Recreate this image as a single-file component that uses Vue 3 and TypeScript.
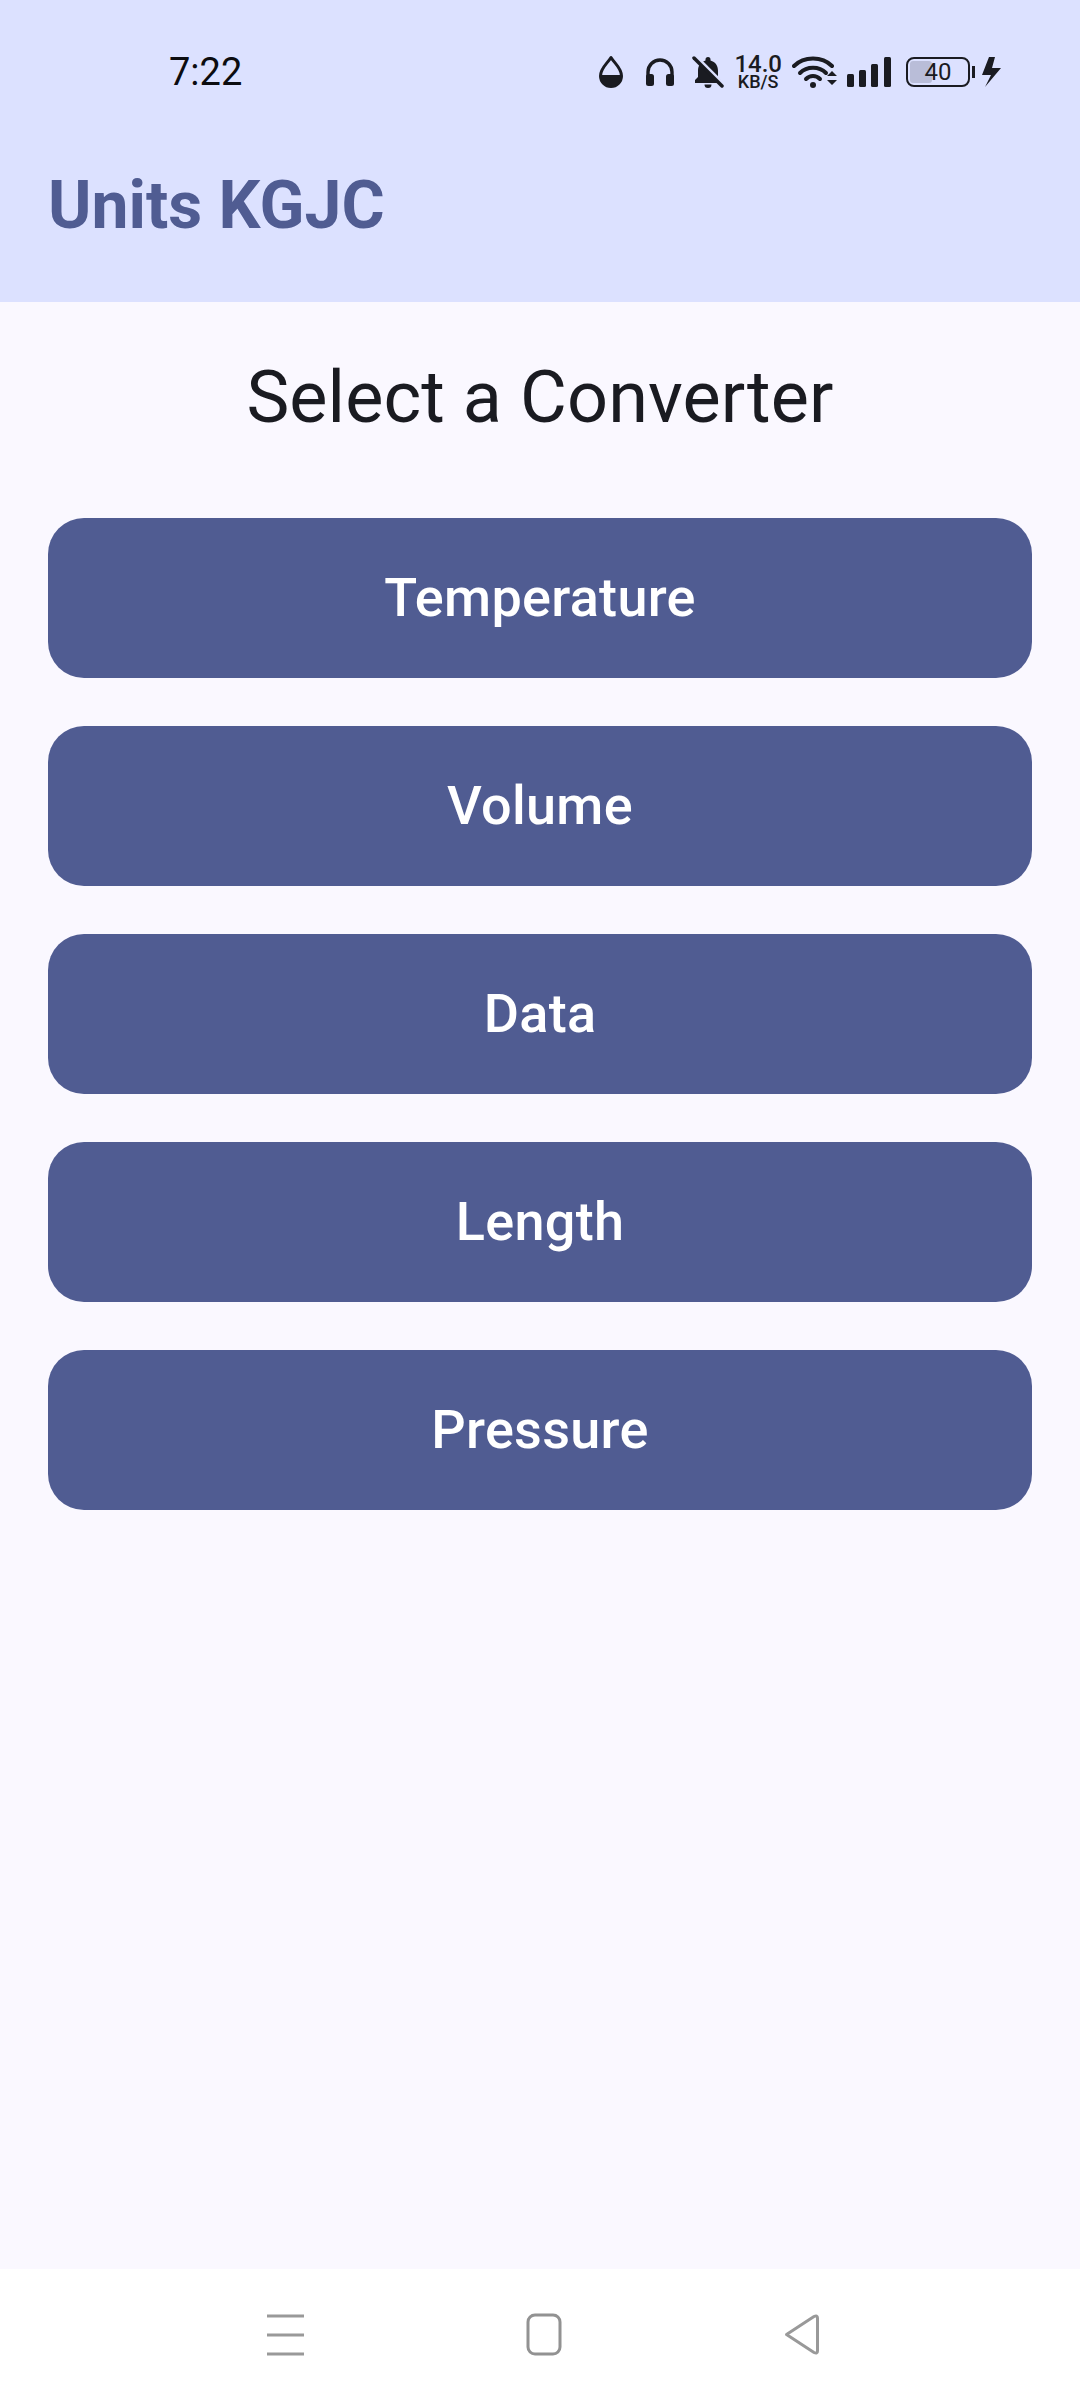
<template>
  <div class="screen">
    <header class="top">
      <div class="status">
        <span class="time">7:22</span>
        <div class="icons">
          <svg class="ic-drop" width="26" height="34" viewBox="0 0 26 34">
            <path d="M13 2.500 C9 9 2.500 13 2.500 21 a10.500 10.500 0 0 0 21 0 C23.500 13 17 9 13 2.500Z" fill="none" stroke="#1a1b21" stroke-width="3" stroke-linejoin="round" />
            <path d="M3 20 H23 V21 a10 10 0 0 1 -20 0Z" fill="#1a1b21" />
          </svg>
          <svg class="ic-phones" width="32" height="30" viewBox="0 0 32 30">
            <path d="M4 20 V15 a12 12 0 0 1 24 0 V20" fill="none" stroke="#1a1b21" stroke-width="3.400" />
            <rect x="2" y="17" width="8" height="12" rx="2.500" fill="#1a1b21" />
            <rect x="22" y="17" width="8" height="12" rx="2.500" fill="#1a1b21" />
          </svg>
          <svg class="ic-bell" width="32" height="34" viewBox="0 0 32 34">
            <path d="M16 2 a2.500 2.500 0 0 1 2.500 2.500 v1 c5 1.500 7.500 5 7.500 10.500 v6 l3 3 v3 H3 v-3 l3 -3 v-6 c0 -5.500 2.500 -9 7.500 -10.500 v-1 A2.500 2.500 0 0 1 16 2Z" fill="#1a1b21" />
            <path d="M12.500 29.500 h7 a3.500 3.500 0 0 1 -7 0Z" fill="#1a1b21" />
            <path d="M4 2 L32 30" stroke="#dce1ff" stroke-width="4" />
            <path d="M2 3 L30 31" stroke="#1a1b21" stroke-width="3.500" stroke-linecap="round" />
          </svg>
          <div class="speed">
            <span class="speed-num">14.0</span>
            <span class="speed-unit">KB/S</span>
          </div>
          <svg class="ic-wifi" width="46" height="34" viewBox="0 0 46 34">
            <path d="M2 11 C12 1 30 1 40 11" fill="none" stroke="#1a1b21" stroke-width="4" stroke-linecap="round" />
            <path d="M8 18 C15 11 27 11 34 18" fill="none" stroke="#1a1b21" stroke-width="4" stroke-linecap="round" />
            <path d="M14 24 C18 20 24 20 28 24" fill="none" stroke="#1a1b21" stroke-width="4" stroke-linecap="round" />
            <circle cx="21" cy="30" r="3" fill="#1a1b21" />
            <path d="M35 21 l5 -5 l5 5Z M35 25 l5 5 l5 -5Z" fill="#1a1b21" />
          </svg>
          <svg class="ic-signal" width="44" height="32" viewBox="0 0 44 32">
            <rect x="0" y="18" width="7" height="13" rx="1.500" fill="#1a1b21" />
            <rect x="12" y="14" width="7" height="17" rx="1.500" fill="#1a1b21" />
            <rect x="24" y="8" width="7" height="23" rx="1.500" fill="#1a1b21" />
            <rect x="37" y="1" width="7" height="30" rx="1.500" fill="#1a1b21" />
          </svg>
          <div class="battery">
            <div class="battery-body">
              <div class="battery-fill" :style="{ width: batteryLevel + '%' }"></div>
              <span class="battery-num">{{ batteryLevel }}</span>
            </div>
            <div class="battery-tip"></div>
          </div>
          <svg class="ic-bolt" width="19" height="30" viewBox="0 0 19 30">
            <path d="M7 0 L0 18 H9 L3 30 L19 11 H10 L13 0Z" fill="#1a1b21" />
          </svg>
        </div>
      </div>
      <h1 class="app-title">Units KGJC</h1>
    </header>

    <main class="content">
      <h2 class="heading">Select a Converter</h2>
      <div class="list">
        <button v-for="item in converters" :key="item" class="conv-btn">{{ item }}</button>
      </div>
    </main>

    <nav class="navbar">
      <svg width="37" height="44" viewBox="0 0 37 44">
        <path d="M0 3 H37 M0 22 H37 M0 41 H37" stroke="#999" stroke-width="3" />
      </svg>
      <svg width="36" height="44" viewBox="0 0 36 44">
        <rect x="2" y="2" width="32" height="39" rx="7" fill="none" stroke="#929292" stroke-width="3" />
      </svg>
      <svg width="36" height="44" viewBox="0 0 36 44">
        <path d="M2.500 21.500 L30 3.500 Q33.500 1.800 33.500 5 V38 Q33.500 41.200 30 39.500Z" fill="none" stroke="#999" stroke-width="3" stroke-linejoin="round" />
      </svg>
    </nav>
  </div>
</template>

<script setup lang="ts">
const batteryLevel = 40;
const converters: string[] = ['Temperature', 'Volume', 'Data', 'Length', 'Pressure'];
</script>

<style>
html,
body {
  margin: 0;
  background: #faf8ff;
}
</style>

<style scoped>
.screen {
  width: 1080px;
  height: 2400px;
  display: flex;
  flex-direction: column;
  background: #faf8ff;
  font-family: Roboto, "Liberation Sans", sans-serif;
  color: #1a1b21;
}
.top {
  height: 302px;
  box-sizing: border-box;
  background: #dce1ff;
  padding-top: 50px;
}
.status {
  height: 44px;
  display: flex;
  align-items: center;
  justify-content: space-between;
  padding: 0 79px 0 169px;
}
.time {
  font-size: 38px;
  color: #0c0c10;
}
.icons {
  display: flex;
  align-items: center;
}
.ic-phones {
  margin-left: 20px;
}
.ic-bell {
  margin-left: 16px;
}
.speed {
  margin-left: 10px;
  display: flex;
  flex-direction: column;
  align-items: center;
  line-height: 1;
}
.speed-num {
  font-size: 24px;
  font-weight: 500;
  height: 20px;
  line-height: 20px;
}
.speed-unit {
  font-size: 18px;
  font-weight: 500;
  height: 16px;
  line-height: 16px;
}
.ic-wifi {
  margin-left: 10px;
}
.ic-signal {
  margin-left: 9px;
}
.battery {
  margin-left: 15px;
  display: flex;
  align-items: center;
}
.battery-body {
  width: 64px;
  height: 30px;
  box-sizing: border-box;
  border: 2.5px solid #1a1b21;
  border-radius: 8px;
  padding: 2px;
  position: relative;
}
.battery-fill {
  height: 100%;
  background: #b9bdd8;
  border-radius: 3px;
}
.battery-num {
  position: absolute;
  inset: 0;
  display: flex;
  align-items: center;
  justify-content: center;
  font-size: 24px;
}
.battery-tip {
  width: 3px;
  height: 12px;
  margin-left: 2px;
  background: #1a1b21;
}
.ic-bolt {
  margin-left: 7px;
}
.app-title {
  margin: 72px 0 0 48px;
  font-size: 66px;
  line-height: 80px;
  font-weight: 700;
  color: #505c92;
}
.content {
  flex: 1;
  padding: 0 48px;
}
.heading {
  margin: 56px 0 0;
  text-align: center;
  font-size: 72px;
  line-height: 80px;
  font-weight: 400;
  letter-spacing: 0.1px;
}
.list {
  margin-top: 80px;
  display: flex;
  flex-direction: column;
  gap: 48px;
}
.conv-btn {
  height: 160px;
  border: none;
  border-radius: 36px;
  background: #505c92;
  color: #fff;
  font-family: inherit;
  font-size: 54px;
  font-weight: 500;
  letter-spacing: 0.3px;
  padding: 0 0 2px;
}
.navbar {
  height: 131px;
  padding-left: 6px;
  background: #fff;
  display: flex;
  align-items: center;
  justify-content: center;
  gap: 222px;
}
</style>
